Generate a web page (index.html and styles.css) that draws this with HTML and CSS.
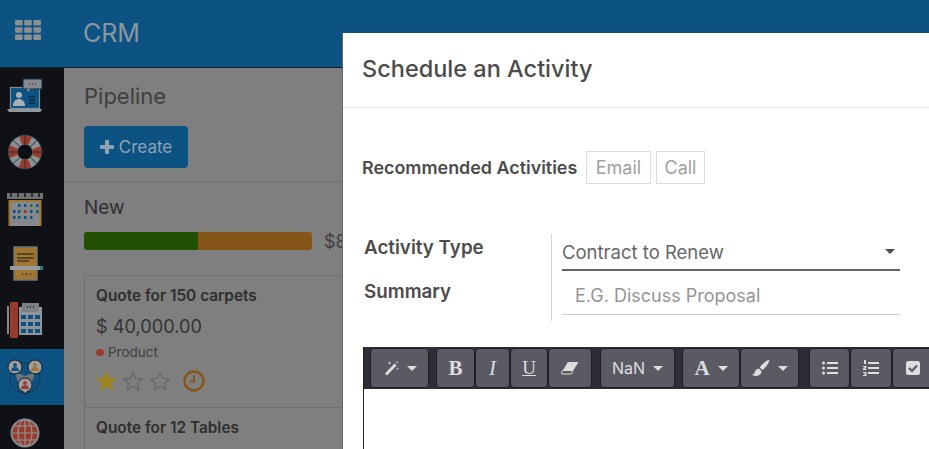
FILE: index.html
```html
<!DOCTYPE html>
<html lang="en">

<head>
    <meta charset="UTF-8">
    <meta name="viewport" content="width=device-width, initial-scale=1.0">
    <title>CRM - Schedule an Activity</title>
    <link rel="stylesheet" href="styles.css">
</head>

<body>
    <header class="topbar">
        <a class="apps-btn" href="#">
            <svg width="26" height="20" viewBox="0 0 26 20" fill="currentColor">
                <rect x="0" y="0" width="7.600" height="5.400" rx="1" /><rect x="9.200" y="0" width="7.600" height="5.400" rx="1" /><rect x="18.400" y="0" width="7.600" height="5.400" rx="1" />
                <rect x="0" y="7.300" width="7.600" height="5.400" rx="1" /><rect x="9.200" y="7.300" width="7.600" height="5.400" rx="1" /><rect x="18.400" y="7.300" width="7.600" height="5.400" rx="1" />
                <rect x="0" y="14.600" width="7.600" height="5.400" rx="1" /><rect x="9.200" y="14.600" width="7.600" height="5.400" rx="1" /><rect x="18.400" y="14.600" width="7.600" height="5.400" rx="1" />
            </svg>
        </a>
        <span class="brand">CRM</span>
    </header>

    <div class="app">
        <nav class="sidebar">
            <a class="side-item" href="#">
                <svg width="36" height="36" viewBox="0 0 36 36">
                    <rect x="3.500" y="9.500" width="29" height="21" fill="#0c5283" stroke="#7e8e98" stroke-width="1.200" />
                    <path d="M0 31h35l-1.500 3H2z" fill="#8f989d" />
                    <rect x="16" y="1" width="19" height="10" rx="1" fill="#85898c" stroke="#0c3550" />
                    <path d="M20 11v3l4-3z" fill="#85898c" />
                    <path d="M22 6h1M25 6h1M28 6h1" stroke="#14171a" />
                    <circle cx="12" cy="17" r="3" fill="#a9afb3" />
                    <path d="M6 28c0-5 3-7 6-7s6 2 6 7z" fill="#a9afb3" />
                    <path d="M22 19h6M22 22h6M22 25h6" stroke="#10151a" stroke-width="1.200" />
                </svg>
            </a>
            <a class="side-item" href="#">
                <svg width="36" height="36" viewBox="0 0 36 36">
                    <circle cx="18" cy="18" r="17.500" fill="#0c2a40" />
                    <circle cx="18" cy="18" r="12" fill="none" stroke="#8b8f90" stroke-width="9" />
                    <circle cx="18" cy="18" r="12" fill="none" stroke="#9a3a2c" stroke-width="9" stroke-dasharray="9.420 9.420" stroke-dashoffset="4.700" />
                    <circle cx="18" cy="18" r="7" fill="#0b0e12" />
                    <path d="M5 5L13 13M31 5L23 13M5 31L13 23M31 31L23 23M0 18H11M25 18H36M18 0V11M18 25V36" stroke="#0c2a40" stroke-width="0.800" />
                </svg>
            </a>
            <a class="side-item" href="#">
                <svg width="36" height="36" viewBox="0 0 36 36">
                    <rect x="0" y="3" width="36" height="6" fill="#6f7376" />
                    <path d="M4 1v6M11 1v6M18 1v6M25 1v6M32 1v6" stroke="#15181b" stroke-width="1.500" />
                    <rect x="1.500" y="10" width="33" height="26" fill="#a07630" />
                    <rect x="3.500" y="12" width="29" height="24" fill="#85898c" />
                    <g fill="#0c5283">
                        <rect x="11" y="14" width="2.500" height="3" /><rect x="17" y="14" width="2.500" height="3" /><rect x="23" y="14" width="2.500" height="3" fill="#2a6b45" /><rect x="29" y="14" width="2.500" height="3" />
                        <rect x="6" y="20" width="2.500" height="3" /><rect x="11" y="20" width="2.500" height="3" /><rect x="17" y="20" width="2.500" height="3" fill="#9a3a2c" /><rect x="23" y="20" width="2.500" height="3" /><rect x="29" y="20" width="2.500" height="3" />
                        <rect x="6" y="26" width="2.500" height="3" /><rect x="11" y="26" width="2.500" height="3" /><rect x="17" y="26" width="2.500" height="3" /><rect x="23" y="26" width="2.500" height="3" />
                    </g>
                </svg>
            </a>
            <a class="side-item" href="#">
                <svg width="36" height="36" viewBox="0 0 36 36">
                    <rect x="7" y="1" width="23" height="33" fill="#a07630" stroke="#6f7376" stroke-width="1.500" />
                    <path d="M10 8h17M10 12h17M10 15h12" stroke="#14171a" stroke-width="1.200" />
                    <rect x="3" y="20" width="30" height="4" fill="#979b9e" />
                    <rect x="33" y="20" width="3" height="4" fill="#2a7a76" />
                    <path d="M15 28h1M19 28h1M23 28h1" stroke="#14171a" stroke-width="1.500" />
                </svg>
            </a>
            <a class="side-item" href="#">
                <svg width="36" height="36" viewBox="0 0 36 36">
                    <rect x="0" y="4" width="2" height="28" fill="#85898c" />
                    <rect x="3" y="0" width="8" height="36" rx="1" fill="#9a3a2c" />
                    <path d="M6.500 8h1M6.500 16h1M6.500 24h1" stroke="#14171a" stroke-width="1.200" />
                    <rect x="12" y="5" width="23" height="28" fill="#8f9498" />
                    <rect x="15" y="1" width="17" height="9" fill="#7c8184" />
                    <path d="M20 5h1M23 5h1M26 5h1" stroke="#14171a" stroke-width="1.500" />
                    <g fill="#0c5283">
                        <rect x="14" y="13" width="5" height="4" /><rect x="21" y="13" width="5" height="4" /><rect x="28" y="13" width="5" height="4" />
                        <rect x="14" y="20" width="5" height="4" /><rect x="21" y="20" width="5" height="4" /><rect x="28" y="20" width="5" height="4" />
                        <rect x="14" y="27" width="5" height="4" /><rect x="21" y="27" width="5" height="4" /><rect x="28" y="27" width="5" height="4" />
                    </g>
                </svg>
            </a>
            <a class="side-item active" href="#">
                <svg width="36" height="38" viewBox="0 0 36 38">
                    <circle cx="18" cy="20" r="15" fill="none" stroke="#10151a" stroke-width="1" stroke-dasharray="1.500 1.500" />
                    <path d="M8 14l10 4 10-4-4 14H12z" fill="#6f7376" />
                    <path d="M8 2a7 7 0 0 1 7 7c0 3-1.500 5-5 6.500L7 16C3 15 1 12.500 1 9a7 7 0 0 1 7-7z" fill="#9a9ea1" stroke="#10151a" />
                    <path d="M28 2a7 7 0 0 1 7 7c0 3.500-2 6-6 7l-3-.5C22.500 14 21 12 21 9a7 7 0 0 1 7-7z" fill="#9a9ea1" stroke="#10151a" />
                    <path d="M18 20a7 7 0 0 1 7 7c0 4-3 6-5 6.500L18 36l-2-2.500C14 33 11 31 11 27a7 7 0 0 1 7-7z" fill="#9a9ea1" stroke="#10151a" />
                    <circle cx="8" cy="7" r="2" fill="#0c5283" /><path d="M4 13c0-3 2-4 4-4s4 1 4 4z" fill="#0c5283" />
                    <circle cx="28" cy="7" r="2" fill="#a07630" /><path d="M24 13c0-3 2-4 4-4s4 1 4 4z" fill="#a07630" />
                    <circle cx="18" cy="25" r="2" fill="#9a3a2c" /><path d="M14 31c0-3 2-4 4-4s4 1 4 4z" fill="#9a3a2c" />
                </svg>
            </a>
            <a class="side-item" href="#">
                <svg width="36" height="36" viewBox="0 0 36 36">
                    <circle cx="18" cy="18" r="13.500" fill="#9a3a2c" stroke="#85898c" stroke-width="2" />
                    <path d="M5 18h26M18 5v26M7 11h22M7 25h22" stroke="#8f9498" stroke-width="1.200" fill="none" />
                    <ellipse cx="18" cy="18" rx="7" ry="13.500" fill="none" stroke="#8f9498" stroke-width="1.200" />
                </svg>
            </a>
        </nav>

        <main class="content">
            <div class="control-panel">
                <h2 class="page-title">Pipeline</h2>
                <button class="btn-create">
                    <svg width="14" height="14" viewBox="0 0 14 14" fill="currentColor">
                        <path d="M5 1a1 1 0 0 1 1-1h2a1 1 0 0 1 1 1v4h4a1 1 0 0 1 1 1v2a1 1 0 0 1-1 1H9v4a1 1 0 0 1-1 1H6a1 1 0 0 1-1-1V9H1a1 1 0 0 1-1-1V6a1 1 0 0 1 1-1h4z" />
                    </svg>
                    Create
                </button>
            </div>

            <section class="kanban-col">
                <h3 class="col-title">New</h3>
                <div class="progress-row">
                    <div class="progress">
                        <span class="progress-won"></span>
                        <span class="progress-warn"></span>
                    </div>
                    <span class="col-total">$8</span>
                </div>

                <article class="card">
                    <div class="card-title">Quote for 150 carpets</div>
                    <div class="card-amount">$ 40,000.00</div>
                    <div class="card-tag"><i class="tag-dot"></i>Product</div>
                    <div class="card-foot">
                        <svg width="76" height="22" viewBox="0 0 76 22">
                            <path d="M10.500 1l3 7 7.500.6-5.700 4.900 1.800 7.300-6.600-3.900-6.600 3.900 1.800-7.300L0 8.600 7.500 8z" fill="#9c8520" />
                            <path d="M37 2.500l2.700 6 6.500.6-4.900 4.300 1.500 6.300-5.800-3.400-5.800 3.400 1.500-6.300-4.900-4.300 6.500-.6z" fill="none" stroke="#666" stroke-width="1.300" />
                            <path d="M64 2.500l2.700 6 6.500.6-4.900 4.300 1.500 6.300-5.800-3.400-5.800 3.400 1.500-6.300-4.900-4.300 6.500-.6z" fill="none" stroke="#666" stroke-width="1.300" />
                        </svg>
                        <svg class="clock" width="22" height="22" viewBox="0 0 22 22" fill="none" stroke="#85551a" stroke-width="2.400">
                            <circle cx="11" cy="11" r="9.500" /><path d="M11 5v6.500H6.500" stroke-width="2" />
                        </svg>
                    </div>
                </article>

                <article class="card">
                    <div class="card-title">Quote for 12 Tables</div>
                </article>
            </section>
        </main>
    </div>

    <div class="modal">
        <div class="modal-header">
            <h4 class="modal-title">Schedule an Activity</h4>
        </div>
        <div class="modal-body">
            <div class="recommended">
                <span class="rec-label">Recommended Activities</span>
                <button class="rec-btn email">Email</button>
                <button class="rec-btn call">Call</button>
            </div>

            <div class="form-grid">
                <div class="form-labels">
                    <label class="form-label">Activity Type</label>
                    <label class="form-label">Summary</label>
                </div>
                <div class="form-fields">
                    <div class="select-field">Contract to Renew<i class="caret"></i></div>
                    <div class="input-field">E.G. Discuss Proposal</div>
                </div>
            </div>

            <div class="editor">
                <div class="toolbar">
                    <div class="tool-group">
                        <button class="tool w59">
                            <svg width="16" height="16" viewBox="0 0 16 16" fill="currentColor">
                                <path d="M11.500 3.500l2 2L4 15.500l-2-2z" /><path d="M6.500 1l.5 1.500L8.500 3 7 3.500 6.500 5 6 3.500 4.500 3 6 2.500zM14 1l.4 1 1 .4-1 .4-.4 1-.4-1-1-.4 1-.4zM14.500 7.500l.4 1 1 .4-1 .4-.4 1-.4-1-1-.4 1-.4z" />
                            </svg>
                            <i class="caret light"></i>
                        </button>
                    </div>
                    <div class="tool-group">
                        <button class="tool w39 serif-b">B</button>
                        <button class="tool w35 serif-i">I</button>
                        <button class="tool w38 serif-u">U</button>
                        <button class="tool w44">
                            <svg width="18" height="14" viewBox="0 0 18 14" fill="currentColor">
                                <path d="M7 1h10.500l-5 8H2z" />
                                <path d="M1.500 9.500h10.500L10 13H.8L.5 11.500z" fill="none" stroke="currentColor" stroke-width="1" />
                            </svg>
                        </button>
                    </div>
                    <div class="tool-group gap8">
                        <button class="tool w75 nan">NaN<i class="caret light"></i></button>
                    </div>
                    <div class="tool-group">
                        <button class="tool w57 serif-a">A<i class="caret light"></i></button>
                        <button class="tool w59">
                            <svg width="18" height="18" viewBox="0 0 18 18" fill="currentColor">
                                <path d="M16.500 1c.7 0 1 .8.700 1.500C15.500 6 13 9.500 10.500 11L7.700 8.500C10 5.500 14 1.500 16.500 1zM6.800 9.500l2.700 2.400C9.500 15 7 17 3.500 17 2 17 .8 16.500 0 15.800c1.500-.3 2.200-1 2.700-2.300.6-2 2-3.700 4.100-4z" />
                            </svg>
                            <i class="caret light"></i>
                        </button>
                    </div>
                    <div class="tool-group gap9">
                        <button class="tool w41">
                            <svg width="16" height="14" viewBox="0 0 16 14" fill="currentColor">
                                <circle cx="1.500" cy="2" r="1.500" /><circle cx="1.500" cy="7" r="1.500" /><circle cx="1.500" cy="12" r="1.500" />
                                <rect x="5" y="1" width="11" height="2" /><rect x="5" y="6" width="11" height="2" /><rect x="5" y="11" width="11" height="2" />
                            </svg>
                        </button>
                        <button class="tool w42">
                            <svg width="16" height="16" viewBox="0 0 16 16" fill="currentColor">
                                <rect x="1" y="0" width="2" height="4" /><path d="M0 6h3.500v1.500L2 9h1.500v1H0V8.500L2 7H0z" /><path d="M0 12h3.500v4H0v-1h2.300v-.5H1v-1h1.300V13H0z" />
                                <rect x="5" y="2" width="11" height="2" /><rect x="5" y="7" width="11" height="2" /><rect x="5" y="12" width="11" height="2" />
                            </svg>
                        </button>
                        <button class="tool w42">
                            <svg width="14" height="14" viewBox="0 0 14 14">
                                <rect width="14" height="14" rx="2.500" fill="currentColor" />
                                <path d="M3 7l3 3 5-5.500" fill="none" stroke="#5a5a64" stroke-width="2.200" />
                            </svg>
                        </button>
                    </div>
                </div>
                <div class="editable"></div>
            </div>
        </div>
    </div>
</body>

</html>
```

FILE: styles.css
```css
* {
    box-sizing: border-box;
}

html,
body {
    height: 100%;
}

body {
    margin: 0;
    overflow: hidden;
    font-family: 'Inter', 'Roboto', sans-serif;
    color: #3f3f3f;
    background-color: #7f7f7f;
}

button {
    font-family: inherit;
    cursor: pointer;
}

/* the page behind the dialog, colours already dimmed */
.topbar {
    display: flex;
    align-items: center;
    height: 68px;
    background-color: #0c5283;
    border-bottom: 1px solid #0a1c2a;
}

.apps-btn {
    display: flex;
    justify-content: center;
    width: 56px;
    margin-bottom: 7px;
    color: #8b8f92;
}

.brand {
    margin-left: 27px;
    margin-bottom: 2px;
    color: #8b97a0;
    font-size: 25px;
}

.app {
    display: flex;
    width: 342px;
    height: 381px;
    overflow: hidden;
}

.sidebar {
    display: flex;
    flex-direction: column;
    flex: 0 0 64px;
    background-color: #0f1114;
}

.side-item {
    display: flex;
    flex: 0 0 56px;
    align-items: center;
    padding-left: 7px;
}

.side-item.active {
    background-color: #0c5283;
    margin-top: 1px;
}

.content {
    flex: 1;
    min-width: 0;
    overflow: hidden;
}

.control-panel {
    height: 114px;
    padding: 15px 20px 0;
    border-bottom: 1px solid #6f6f6f;
}

.page-title {
    margin: 0 0 17px;
    font-size: 22px;
    line-height: 26px;
    font-weight: 400;
    color: #3f3f3f;
}

.btn-create {
    display: flex;
    align-items: center;
    justify-content: center;
    gap: 5px;
    width: 104px;
    height: 42px;
    color: #8da3b3;
    font-size: 17px;
    background-color: #0c5283;
    border: 0;
    border-radius: 4px;
}

.kanban-col {
    padding: 14px 0 0 20px;
}

.col-title {
    margin: 0 0 12px;
    font-size: 19px;
    line-height: 24px;
    font-weight: 400;
    color: #2f2f2f;
}

.progress-row {
    display: flex;
    align-items: center;
    gap: 12px;
    height: 18px;
    margin-bottom: 25px;
    white-space: nowrap;
}

.progress {
    display: flex;
    flex: 0 0 228px;
    height: 18px;
    overflow: hidden;
    border-radius: 3px;
}

.progress-won {
    width: 114px;
    background-color: #235104;
}

.progress-warn {
    flex: 1;
    background-color: #85551a;
}

.col-total {
    font-size: 18px;
    color: #3f3f3f;
}

.card {
    height: 132px;
    padding: 10px 0 0 11px;
    border-top: 1px solid #6f6f6f;
    border-left: 1px solid #6f6f6f;
}

.card-title {
    font-size: 15.400px;
    line-height: 20px;
    font-weight: 600;
    color: #2e2e2e;
    white-space: nowrap;
}

.card-amount {
    margin-top: 8px;
    font-size: 18.200px;
    line-height: 24px;
    color: #333;
}

.card-tag {
    display: flex;
    align-items: center;
    gap: 4px;
    margin-top: 5px;
    font-size: 13.500px;
    line-height: 18px;
    color: #3f3f3f;
}

.tag-dot {
    width: 8px;
    height: 7px;
    background-color: #9a3a2c;
    border-radius: 50%;
}

.card-foot {
    display: flex;
    align-items: center;
    gap: 11px;
    margin-top: 9px;
}

/* dialog */
.modal {
    position: absolute;
    top: 33px;
    left: 342px;
    right: 0;
    bottom: 0;
    background-color: #fff;
    border-left: 1px solid #666;
    overflow: hidden;
    color: #4c4c4c;
}

.modal-header {
    display: flex;
    align-items: center;
    height: 75px;
    padding-left: 19px;
    padding-bottom: 4px;
    border-bottom: 1px solid #e3e3e3;
}

.modal-title {
    margin: 0;
    font-size: 23.500px;
    font-weight: 500;
    white-space: nowrap;
}

.modal-body {
    padding: 43px 0 0 19px;
}

.recommended {
    display: flex;
    align-items: center;
    height: 33px;
}

.rec-label {
    width: 224px;
    font-size: 17.900px;
    font-weight: 600;
    white-space: nowrap;
}

.rec-btn {
    height: 33px;
    margin-right: 5px;
    padding: 0;
    color: #a0a0a0;
    font-size: 18px;
    background: #fff;
    border: 1px solid #dcdcdc;
}

.email {
    width: 65px;
}

.call {
    width: 49px;
}

.form-grid {
    display: flex;
    margin-top: 50px;
    margin-left: 2px;
}

.form-labels {
    display: flex;
    flex-direction: column;
    flex: 0 0 187px;
    gap: 20px;
    padding-top: 2px;
}

.form-label {
    font-size: 18.800px;
    line-height: 24px;
    font-weight: 600;
    white-space: nowrap;
}

.form-fields {
    flex: 0 0 350px;
    height: 87px;
    padding-left: 10px;
    border-left: 1px solid #d5d5d5;
}

.select-field {
    display: flex;
    align-items: center;
    justify-content: space-between;
    width: 338px;
    height: 37px;
    padding-right: 5px;
    color: #666;
    font-size: 18.500px;
    border-bottom: 2px solid #666;
}

.input-field {
    display: flex;
    align-items: center;
    width: 338px;
    height: 44px;
    padding-top: 6px;
    padding-left: 13px;
    color: #959595;
    font-size: 18px;
    border-bottom: 1px solid #ccc;
}

.caret {
    display: inline-block;
    border-top: 5px solid #4c4c4c;
    border-left: 5px solid transparent;
    border-right: 5px solid transparent;
}

.caret.light {
    border-top-color: #ddd;
}

.editor {
    margin-top: 26px;
    margin-left: 1px;
    border-left: 1px solid #222;
}

.toolbar {
    display: flex;
    gap: 7px;
    height: 42px;
    padding: 1px 0 1px 6px;
    background-color: #2d2d36;
    overflow: hidden;
}

.tool-group {
    display: flex;
    flex-shrink: 0;
}

.gap8 {
    margin-left: 1px;
}

.gap9 {
    margin-left: 3px;
}

.tool {
    display: flex;
    align-items: center;
    justify-content: center;
    gap: 8px;
    height: 40px;
    padding: 0;
    color: #ddd;
    font-size: 16px;
    background-color: #5a5a64;
    border: 1px solid #1f1f26;
    border-radius: 4px;
}

.w35 { width: 35px; }
.w38 { width: 38px; }
.w39 { width: 39px; }
.w41 { width: 41px; }
.w42 { width: 42px; }
.w44 { width: 44px; }
.w57 { width: 58px; }
.w59 { width: 59px; }
.w75 { width: 75px; }

.serif-b,
.serif-i,
.serif-u,
.serif-a {
    font-family: 'Liberation Serif', serif;
    font-size: 21px;
}

.serif-b,
.serif-a {
    font-weight: bold;
}

.serif-i {
    font-style: italic;
}

.serif-u {
    text-decoration: underline;
    font-size: 19px;
}

.editable {
    height: 60px;
}
```
